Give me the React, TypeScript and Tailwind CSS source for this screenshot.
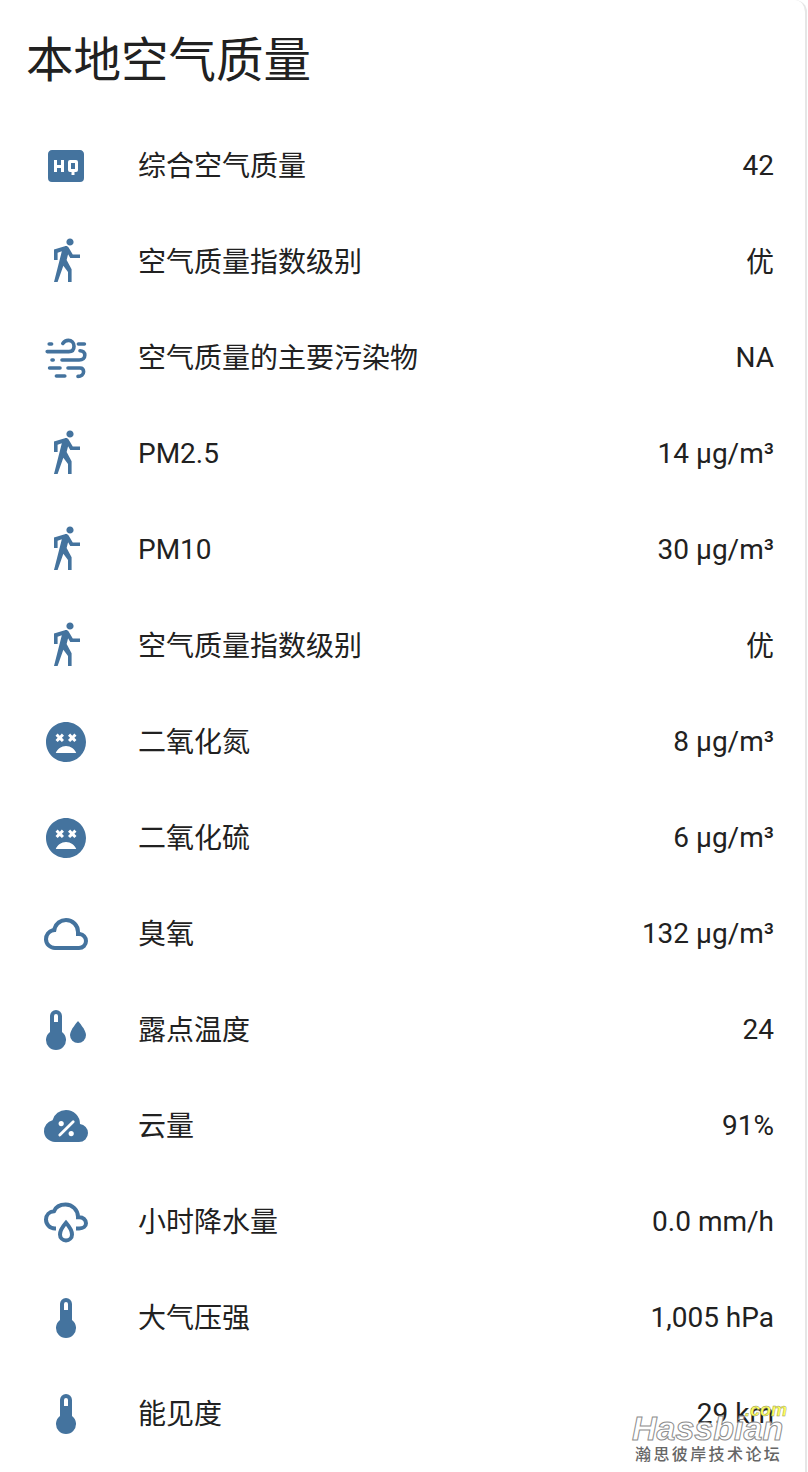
const WALK = 'M14.12,10H19V8.2H15.38L13.38,4.87C13.08,4.37 12.54,4.03 11.92,4.03C11.74,4.03 11.58,4.06 11.42,4.11L6,5.8V11H7.8V7.33L9.91,6.67L6,22H7.8L10.67,13.89L13,17V22H14.8V15.59L12.31,11.05L13.04,8.18M14,3.8C15,3.8 15.8,3 15.8,2C15.8,1 15,0.2 14,0.2C13,0.2 12.2,1 12.2,2C12.2,3 13,3.8 14,3.8Z'
const HQ = 'M14.5,13.5H16.5V10.5H14.5M18,14A1,1 0 0,1 17,15H16.25V16.5H14.75V15H14A1,1 0 0,1 13,14V10A1,1 0 0,1 14,9H17A1,1 0 0,1 18,10M11,15H9.5V13H7.5V15H6V9H7.5V11.5H9.5V9H11M19,4H5C3.89,4 3,4.89 3,6V18A2,2 0 0,0 5,20H19A2,2 0 0,0 21,18V6C21,4.89 20.1,4 19,4Z'
const DEAD = 'M12,2C6.47,2 2,6.47 2,12C2,17.53 6.47,22 12,22A10,10 0 0,0 22,12C22,6.47 17.5,2 12,2M6.76,8.82L7.82,7.76L8.88,8.82L9.94,7.76L11,8.82L9.94,9.88L11,10.94L9.94,12L8.88,10.94L7.82,12L6.76,10.94L7.82,9.88L6.76,8.82M6.89,17.5C7.69,15.46 9.67,14 12,14C14.33,14 16.31,15.46 17.11,17.5H6.89M17.24,10.94L16.18,12L15.12,10.94L14.06,12L13,10.94L14.06,9.88L13,8.82L14.06,7.76L15.12,8.82L16.18,7.76L17.24,8.82L16.18,9.88L17.24,10.94Z'
const CLOUD = 'M6.5 20Q4.22 20 2.61 18.43 1 16.85 1 14.58 1 12.63 2.17 11.1 3.35 9.57 5.25 9.15 5.88 6.85 7.75 5.43 9.63 4 12 4 14.93 4 16.96 6.04 19 8.07 19 11 20.73 11.2 21.86 12.5 23 13.78 23 15.5 23 17.38 21.69 18.69 20.38 20 18.5 20Z'
const CLOUD_INNER = 'M6.5 18H18.5Q19.55 18 20.27 17.27 21 16.55 21 15.5 21 14.45 20.27 13.73 19.55 13 18.5 13H17V11Q17 8.93 15.54 7.46 14.08 6 12 6 9.93 6 8.46 7.46 7 8.93 7 11H6.5Q5.05 11 4.03 12.03 3 13.05 3 14.5 3 15.95 4.03 17 5.05 18 6.5 18Z'
const THERMO = 'M15 13V5A3 3 0 0 0 9 5V13A5 5 0 1 0 15 13M12 4A1 1 0 0 1 13 5V8H11V5A1 1 0 0 1 12 4Z'
const THERMO_LEFT = 'M10 13V5A3 3 0 0 0 4 5V13A5 5 0 1 0 10 13M7 4A1 1 0 0 1 8 5V8H6V5A1 1 0 0 1 7 4Z'

function Icon({ children }: { children: React.ReactNode }) {
  return (
    <svg viewBox="0 0 24 24" className="w-12 h-12 shrink-0 text-[#44739e]" fill="currentColor">
      {children}
    </svg>
  )
}

const walk = <Icon><path d={WALK} /></Icon>
const dead = <Icon><path d={DEAD} /></Icon>
const thermo = <Icon><path d={THERMO} /></Icon>

const dust = (
  <Icon>
    <g fill="none" stroke="currentColor" strokeWidth="1.8" strokeLinecap="round">
      <path d="M3.6 5H4.8M18.2 5H21.2" />
      <path d="M2.6 8.8H13.4C15.2 8.8 16 7.6 16 6.1C16 4.4 14.8 3.2 13.2 3.2C12 3.2 11 3.8 10.4 4.7" />
      <path d="M10 13H18.6C20.4 13 21.4 12 21.4 10.6C21.4 9.2 20.4 8.4 19 8.4" />
      <path d="M5 13H5.6M3.8 17H9M13 17H19C20.2 17 20.8 17.8 20.8 18.9C20.8 20.2 19.6 21.2 18 21.2" />
      <path d="M7.2 21H11.4" />
    </g>
  </Icon>
)

const cloudOutline = <Icon><path fillRule="evenodd" d={CLOUD + CLOUD_INNER} /></Icon>

const thermoWater = (
  <Icon>
    <path d={THERMO_LEFT} />
    <path d="M18 7.5C18 7.5 14 12 14 14.5A4 4 0 0 0 22 14.5C22 12 18 7.5 18 7.5Z" />
  </Icon>
)

const cloudPercent = (
  <Icon>
    <path d={CLOUD} />
    <g fill="#fff">
      <circle cx="9.6" cy="10.8" r="1.3" />
      <circle cx="14.6" cy="15.8" r="1.3" />
    </g>
    <path d="M8.9 16.5L15.6 9.9" stroke="#fff" strokeWidth="1.4" strokeLinecap="round" />
  </Icon>
)

const cloudRain = (
  <Icon>
    <g fill="none" stroke="currentColor" strokeWidth="2">
      <path d="M7 15.2H6.4A4.4 4.4 0 0 1 2 10.8C2 8.5 3.7 6.8 6 6.6C6.8 4.6 9 3.2 11.8 3.2C15.2 3.2 18 6 18 9.4V9.6H18.6C20.6 9.6 22 11 22 12.6C22 14.2 20.6 15.2 18.6 15.2H17" />
      <path d="M12 12.4C12 12.4 9 15.9 9 18.2A3 3 0 0 0 15 18.2C15 15.9 12 12.4 12 12.4Z" />
    </g>
  </Icon>
)

const rows = [
  { icon: <Icon><path d={HQ} /></Icon>, name: '综合空气质量', value: '42' },
  { icon: walk, name: '空气质量指数级别', value: '优' },
  { icon: dust, name: '空气质量的主要污染物', value: 'NA' },
  { icon: walk, name: 'PM2.5', value: '14 µg/m³' },
  { icon: walk, name: 'PM10', value: '30 µg/m³' },
  { icon: walk, name: '空气质量指数级别', value: '优' },
  { icon: dead, name: '二氧化氮', value: '8 µg/m³' },
  { icon: dead, name: '二氧化硫', value: '6 µg/m³' },
  { icon: cloudOutline, name: '臭氧', value: '132 µg/m³' },
  { icon: thermoWater, name: '露点温度', value: '24' },
  { icon: cloudPercent, name: '云量', value: '91%' },
  { icon: cloudRain, name: '小时降水量', value: '0.0 mm/h' },
  { icon: thermo, name: '大气压强', value: '1,005 hPa' },
  { icon: thermo, name: '能见度', value: '29 km' },
]

// latin text sits a pixel higher than the CJK labels
const offset = (s: string) => (/[\u4e00-\u9fff]/.test(s) ? 'mt-[2px]' : 'mt-0')

export default function App() {
  return (
    <div className="relative w-[808px] h-[1472px] overflow-hidden bg-white font-['Roboto','Noto_Sans_CJK_SC',sans-serif] text-[#212121]">
      <div className="w-[807px] h-[1480px] bg-white rounded-tr-[12px] border-r-2 border-[#e6e6e6]">
        <h1 className="h-[118px] pl-[26px] pt-[21px] text-[47.5px] leading-[80px] font-normal">本地空气质量</h1>
        <div className="pl-[42px] pr-[31px]">
          {rows.map((r, i) => (
            <div key={i} className="flex items-center h-[96px]">
              {r.icon}
              <div className={`ml-12 flex-1 text-[28px] leading-10 ${offset(r.name)}`}>{r.name}</div>
              <div className={`text-[28px] leading-10 ${offset(r.value)}`}>{r.value}</div>
            </div>
          ))}
        </div>
      </div>

      <div className="absolute left-[632px] top-[1398px] w-[160px]">
        <div className="absolute left-[113px] top-[2px] text-[18px] leading-[20px] italic font-bold text-[#ffff5c] [-webkit-text-stroke:0.4px_#8f8f5a] font-['Liberation_Sans',sans-serif]">.com</div>
        <div className="absolute left-0 top-[10px] text-[34px] leading-[40px] italic font-bold text-white [-webkit-text-stroke:1px_#8c8c8c] font-['Liberation_Sans',sans-serif]">Hassbian</div>
        <div className="absolute left-[3px] top-[47px] whitespace-nowrap text-[16px] leading-[20px] tracking-[2.4px] text-[#666] font-medium">瀚思彼岸技术论坛</div>
      </div>
    </div>
  )
}
